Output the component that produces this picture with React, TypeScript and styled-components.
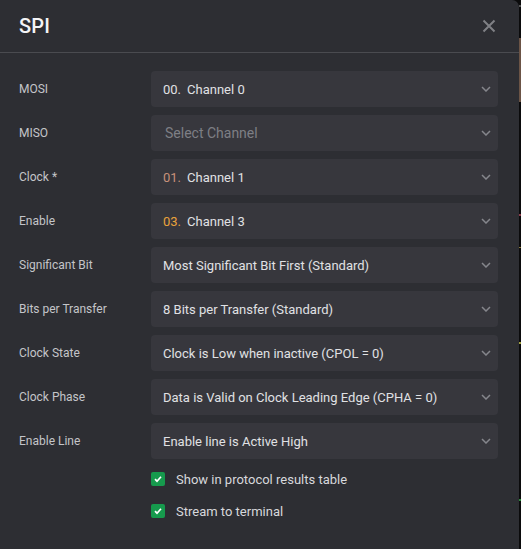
import React from "react";
import styled, { createGlobalStyle } from "styled-components";

const GlobalStyle = createGlobalStyle`
  html, body {
    margin: 0;
    padding: 0;
    background: #0b0b0c;
  }
  body {
    font-family: Roboto, "Liberation Sans", sans-serif;
  }
`;

interface Field {
  label: string;
  value?: string;
  index?: string;
  indexColor?: string;
}

const fields: Field[] = [
  { label: "MOSI", index: "00.", value: "Channel 0" },
  { label: "MISO" },
  { label: "Clock *", index: "01.", value: "Channel 1", indexColor: "#c8917a" },
  { label: "Enable", index: "03.", value: "Channel 3", indexColor: "#e9a23b" },
  { label: "Significant Bit", value: "Most Significant Bit First (Standard)" },
  { label: "Bits per Transfer", value: "8 Bits per Transfer (Standard)" },
  { label: "Clock State", value: "Clock is Low when inactive (CPOL = 0)" },
  { label: "Clock Phase", value: "Data is Valid on Clock Leading Edge (CPHA = 0)" },
  { label: "Enable Line", value: "Enable line is Active High" },
];

const Chevron = () => (
  <svg width="10" height="6" viewBox="0 0 10 6" fill="none">
    <path d="M1 1l4 4 4-4" stroke="#85868c" strokeWidth="1.5" />
  </svg>
);

const Check = () => (
  <svg width="10" height="8" viewBox="0 0 10 8" fill="none">
    <path d="M2 4.2l2 2 4-4.4" stroke="#fff" strokeWidth="1.7" />
  </svg>
);

const App: React.FC = () => {
  return (
    <Screen>
      <GlobalStyle />
      <Dialog>
        <Header>
          <Title>SPI</Title>
          <Close aria-label="close">
            <svg width="14" height="14" viewBox="0 0 14 14">
              <path d="M1.5 1.5l11 11M12.5 1.5l-11 11" stroke="#7f8085" strokeWidth="2" />
            </svg>
          </Close>
        </Header>
        <Body>
          {fields.map((f) => (
            <Row key={f.label}>
              <Label>{f.label}</Label>
              <Select>
                {f.value ? (
                  <Value>
                    {f.index && <Index color={f.indexColor}>{f.index}</Index>}
                    {f.value}
                  </Value>
                ) : (
                  <Placeholder>Select Channel</Placeholder>
                )}
                <Chevron />
              </Select>
            </Row>
          ))}
          <Checks>
            <CheckRow>
              <Box>
                <Check />
              </Box>
              Show in protocol results table
            </CheckRow>
            <CheckRow>
              <Box>
                <Check />
              </Box>
              Stream to terminal
            </CheckRow>
          </Checks>
        </Body>
      </Dialog>
      <Edge />
    </Screen>
  );
};
export default App;

const Screen = styled.div`
  display: flex;
  width: 521px;
  height: 549px;
  overflow: hidden;
`;

const Dialog = styled.div`
  width: 519px;
  flex: none;
  background: #2d2e33;
  border-top-right-radius: 7px;
  display: flex;
  flex-direction: column;
`;

const Edge = styled.div`
  flex: 1;
  background: linear-gradient(
    to bottom,
    #0b0b0c 0,
    #0b0b0c 5px,
    #555 5px,
    #555 7px,
    #0b0b0c 7px,
    #0b0b0c 38px,
    #6b5446 38px,
    #6b5446 102px,
    #0b0b0c 102px,
    #0b0b0c 214px,
    #8a3c4a 214px,
    #8a3c4a 216px,
    #0b0b0c 216px,
    #0b0b0c 247px,
    #8a7a3a 247px,
    #8a7a3a 248px,
    #0b0b0c 248px,
    #0b0b0c 342px,
    #a0a040 342px,
    #a0a040 344px,
    #0b0b0c 344px,
    #0b0b0c 499px,
    #2e8a3e 499px,
    #2e8a3e 501px,
    #0b0b0c 501px
  );
`;

const Header = styled.div`
  height: 52px;
  display: flex;
  align-items: center;
  justify-content: space-between;
  padding: 0 23px 0 19px;
  border-bottom: 1px solid #4a4b50;
`;

const Title = styled.h2`
  margin: 0;
  font-size: 20px;
  font-weight: 500;
  color: #f4f4f6;
  letter-spacing: 0.2px;
`;

const Close = styled.button`
  background: none;
  border: 0;
  padding: 0;
  display: flex;
  cursor: pointer;
`;

const Body = styled.div`
  padding: 18px 21px 0 19px;
  display: flex;
  flex-direction: column;
  gap: 8px;
`;

const Row = styled.div`
  display: grid;
  grid-template-columns: 132px 1fr;
  align-items: center;
`;

const Label = styled.div`
  font-size: 12px;
  color: #c4c5c9;
`;

const Select = styled.div`
  height: 36px;
  box-sizing: border-box;
  background: #37373d;
  border-radius: 4px;
  padding: 0 7px 0 12px;
  display: flex;
  align-items: center;
  justify-content: space-between;
`;

const Value = styled.span`
  font-size: 13px;
  color: #e0e1e4;
`;

const Index = styled.span<{ color?: string }>`
  color: ${(p) => p.color || "#e0e1e4"};
  margin-right: 6px;
`;

const Placeholder = styled.span`
  font-size: 14px;
  color: #7e7f85;
  padding-left: 2px;
`;

const Checks = styled.div`
  padding-left: 132px;
  margin-top: -4px;
  display: flex;
  flex-direction: column;
`;

const CheckRow = styled.label`
  height: 32px;
  display: flex;
  align-items: center;
  gap: 11px;
  font-size: 13px;
  color: #d7d8dc;
`;

const Box = styled.span`
  width: 14px;
  height: 14px;
  border-radius: 2px;
  background: #169a4d;
  display: flex;
  align-items: center;
  justify-content: center;
`;
